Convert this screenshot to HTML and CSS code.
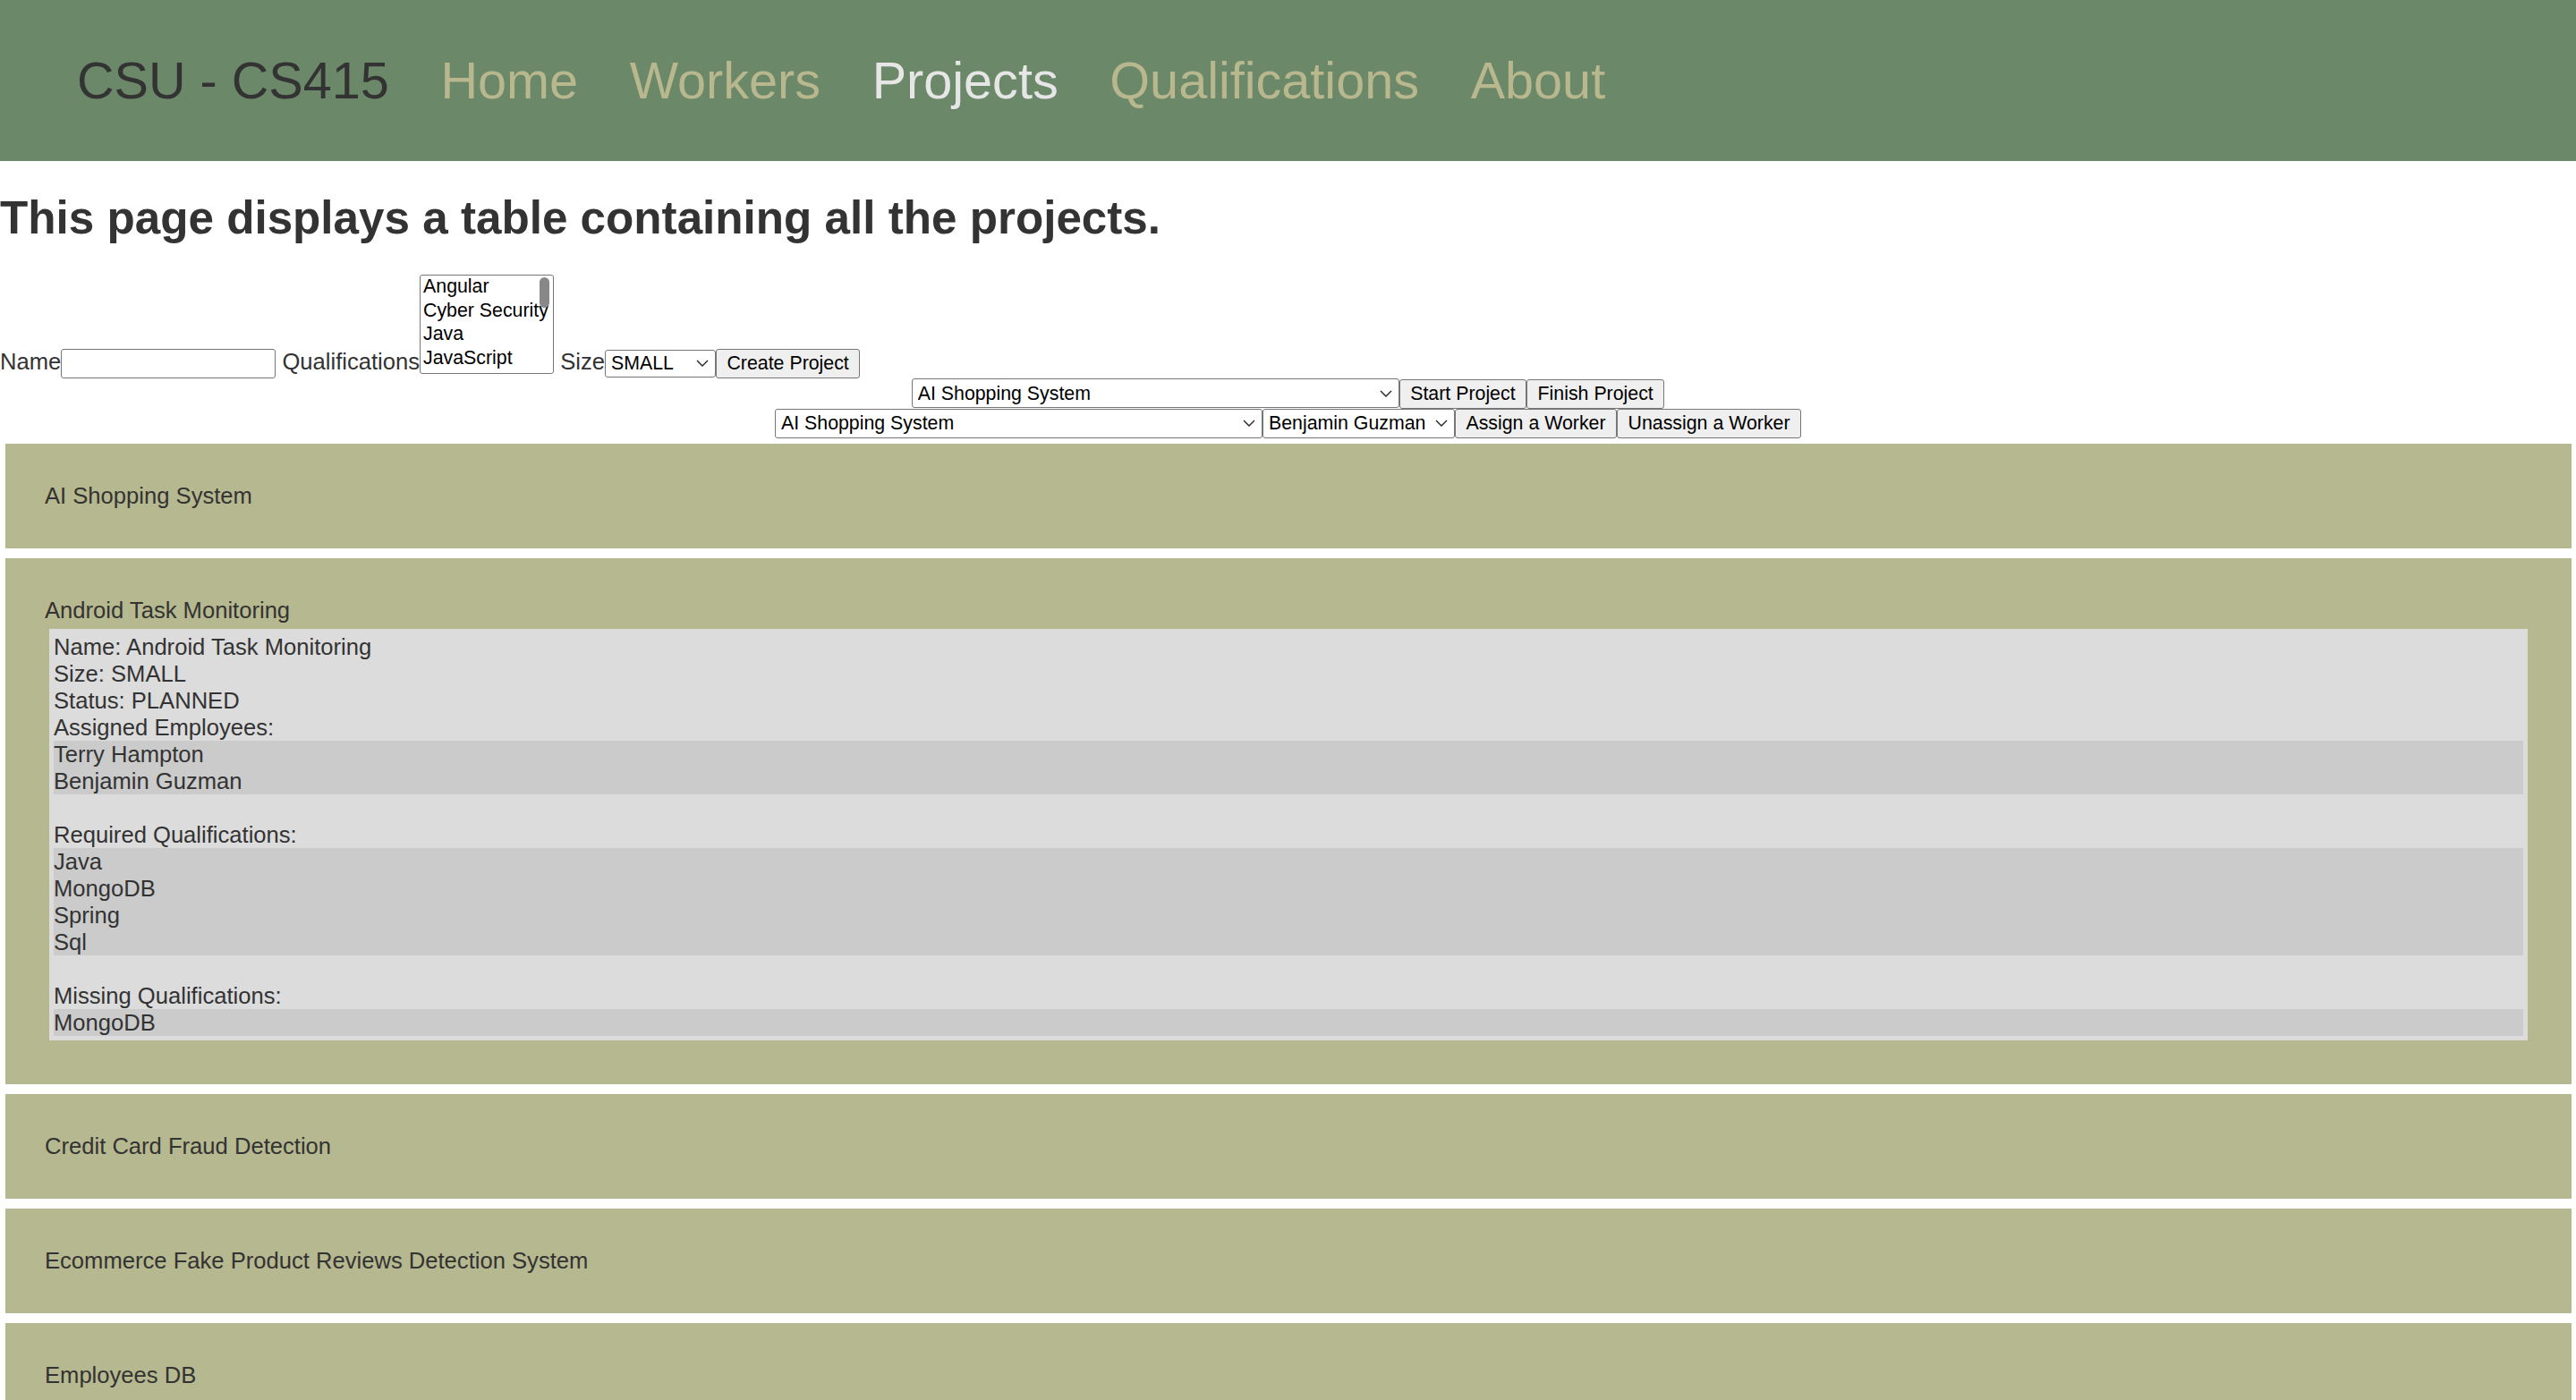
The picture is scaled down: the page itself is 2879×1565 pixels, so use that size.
FILE: index.html
```html
<!DOCTYPE html>
<html lang="en">
<head>
<meta charset="utf-8">
<title>CSU - CS415 Projects</title>
<link rel="stylesheet" href="styles.css">
</head>
<body>
<header class="topbar">
  <span class="brand">CSU - CS415</span>
  <nav class="nav">
    <a class="nav-link" href="#">Home</a>
    <a class="nav-link" href="#">Workers</a>
    <a class="nav-link active" href="#">Projects</a>
    <a class="nav-link" href="#">Qualifications</a>
    <a class="nav-link" href="#">About</a>
  </nav>
</header>

<h1 class="page-title">This page displays a table containing all the projects.</h1>

<form class="create-row">
  <label class="lbl">Name</label><input class="ctl name-input" type="text"> <label class="lbl">Qualifications</label><span class="quals-wrap"><select class="ctl quals" multiple size="4">
    <option>Angular</option>
    <option>Cyber Security</option>
    <option>Java</option>
    <option>JavaScript</option>
    <option>Machine Learning</option>
    <option>MongoDB</option>
    <option>NodeJS</option>
    <option>Python</option>
    <option>React</option>
    <option>Spring</option>
    <option>Sql</option>
    <option>TypeScript</option>
  </select><span class="quals-thumb"></span></span> <label class="lbl">Size</label><select class="ctl dd size-select"><option>SMALL</option><option>MEDIUM</option><option>BIG</option></select><button class="ctl btn" type="button">Create Project</button>
</form>

<div class="action-row"><select class="ctl dd project-select"><option>AI Shopping System</option></select><button class="ctl btn" type="button">Start Project</button><button class="ctl btn" type="button">Finish Project</button></div>
<div class="action-row"><select class="ctl dd project-select"><option>AI Shopping System</option></select><select class="ctl dd worker-select"><option>Benjamin Guzman</option></select><button class="ctl btn" type="button">Assign a Worker</button><button class="ctl btn" type="button">Unassign a Worker</button></div>

<main class="project-list">
  <section class="project-card">
    <div class="project-title">AI Shopping System</div>
  </section>

  <section class="project-card">
    <div class="project-title">Android Task Monitoring</div>
    <div class="details">
      <div>Name: Android Task Monitoring</div>
      <div>Size: SMALL</div>
      <div>Status: PLANNED</div>
      <div>Assigned Employees:</div>
      <ul class="item-list">
        <li>Terry Hampton</li>
        <li>Benjamin Guzman</li>
      </ul>
      <div>Required Qualifications:</div>
      <ul class="item-list">
        <li>Java</li>
        <li>MongoDB</li>
        <li>Spring</li>
        <li>Sql</li>
      </ul>
      <div>Missing Qualifications:</div>
      <ul class="item-list last">
        <li>MongoDB</li>
      </ul>
    </div>
  </section>

  <section class="project-card">
    <div class="project-title">Credit Card Fraud Detection</div>
  </section>

  <section class="project-card">
    <div class="project-title">Ecommerce Fake Product Reviews Detection System</div>
  </section>

  <section class="project-card">
    <div class="project-title">Employees DB</div>
  </section>
</main>
</body>
</html>
```

FILE: styles.css
```css
html {
  scrollbar-width: none;
}

body {
  margin: 0;
  background: #ffffff;
  color: #333333;
  font-family: "Liberation Sans", Arial, Helvetica, sans-serif;
  font-size: 25.6px;
}

.topbar {
  height: 180px;
  background: #6b8969;
  display: flex;
  align-items: center;
  padding-left: 86px;
  gap: 57.6px;
  font-size: 57.6px;
}

.brand {
  color: #333333;
}

.nav {
  display: flex;
  gap: 57.6px;
}

.nav-link {
  color: #b8b78e;
  text-decoration: none;
}

.nav-link.active {
  color: #e6e6e6;
}

.page-title {
  font-size: 51.2px;
  font-weight: bold;
  margin: 34px 0;
  color: #333333;
}

.create-row {
  margin: 0;
}

.lbl {
  color: #333333;
}

.ctl {
  font-family: "Liberation Sans", Arial, Helvetica, sans-serif;
  font-size: 21.33px;
  color: #000000;
  box-sizing: border-box;
  margin: 0;
}

.name-input {
  width: 240px;
  height: 33px;
  border: 1px solid #767676;
  border-radius: 3px;
  padding: 1px 3px;
}

.quals-wrap {
  display: inline-block;
  position: relative;
}

.quals {
  width: 150px;
  height: 111px;
  border: 1px solid #767676;
  border-radius: 3px;
  padding: 0;
  overflow: hidden;
}

.quals option {
  padding: 0 3px 1px;
  line-height: 22.5px;
}

.quals-thumb {
  position: absolute;
  top: 3px;
  right: 5px;
  width: 11px;
  height: 34px;
  border-radius: 6px;
  background: #888888;
}

.dd {
  appearance: none;
  -webkit-appearance: none;
  background: #ffffff url("data:image/svg+xml,%3Csvg xmlns='http://www.w3.org/2000/svg' width='14' height='8' viewBox='0 0 14 8'%3E%3Cpath d='M1 1l6 6 6-6' fill='none' stroke='%23222' stroke-width='1.4'/%3E%3C/svg%3E") no-repeat right 7px center;
  border: 1px solid #767676;
  border-radius: 3px;
  padding: 0 26px 0 6px;
}

.size-select {
  width: 124px;
  height: 31px;
}

.btn {
  height: 33px;
  padding: 1px 11.5px;
  background: #efefef;
  border: 1px solid #767676;
  border-radius: 3px;
}

.action-row {
  text-align: center;
}

.project-select {
  width: 545px;
  height: 33px;
}

.worker-select {
  width: 215px;
  height: 33px;
}

.project-list {
  display: flex;
  flex-direction: column;
  gap: 11px;
  padding: 6px 5px 0 6px;
}

.project-card {
  background: #b6b88f;
  padding: 43px 44px 44px 44px;
  line-height: 30px;
  color: #333333;
}

.details {
  margin: 6px 5px 5px 5px;
  background: #dcdcdc;
  padding: 5px;
}

.item-list {
  list-style: none;
  margin: 0 0 30px 0;
  padding: 0;
  background: #cbcbcb;
}

.item-list.last {
  margin-bottom: 0;
}
```
